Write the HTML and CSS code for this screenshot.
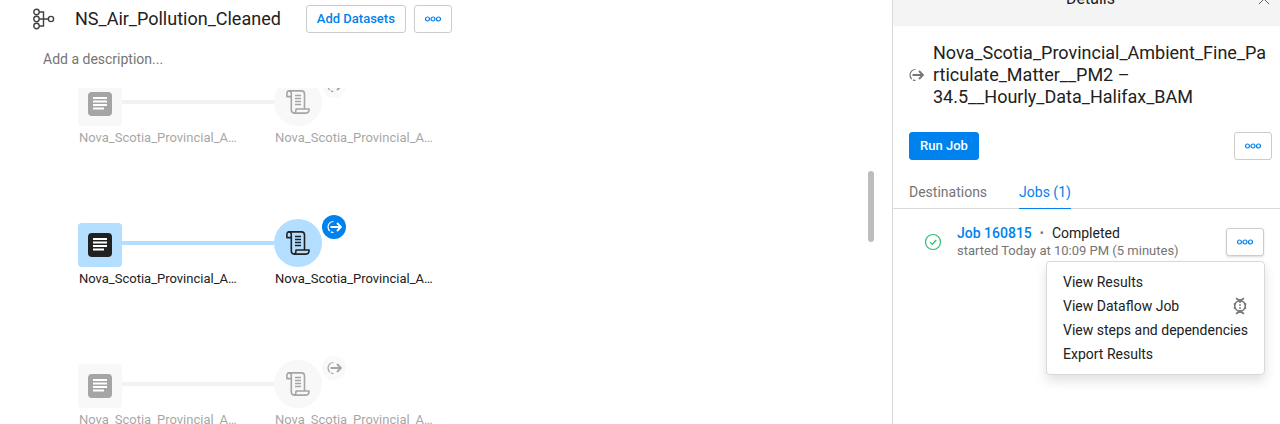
FILE: index.html
```html
<!DOCTYPE html>
<html lang="en">
<head>
<meta charset="utf-8">
<title>NS_Air_Pollution_Cleaned</title>
<link rel="stylesheet" href="styles.css">
</head>
<body>
<svg class="defs" aria-hidden="true">
  <defs>
    <symbol id="dots" viewBox="0 0 18 6">
      <g fill="none" stroke="currentColor" stroke-width="1.2"><circle cx="3.500" cy="3" r="2"/><circle cx="9" cy="3" r="2"/><circle cx="14.500" cy="3" r="2"/></g>
    </symbol>
    <symbol id="dataset" viewBox="0 0 24 24">
      <rect width="24" height="24" rx="4" fill="currentColor"/>
      <path class="dataset-lines" d="M5 6h14M5 9.500h14M5 13h14M5 16.500h11" fill="none" stroke-width="1.900"/>
    </symbol>
    <symbol id="recipe" viewBox="0 0 24 24">
      <g fill="none" stroke="currentColor" stroke-width="1.600" stroke-linejoin="round" stroke-linecap="round">
        <path d="M3 .9h12.500c2 0 3 1.200 3 3V18.500"/>
        <path d="M3 .9C1.500.9.9 2 .9 3.600v3h4.400v-3C5.300 2 4.600.9 3 .9z"/>
        <path d="M5.300 6.600v13c0 2.200 1 3.500 3 3.500h11.700c2 0 3.100-1.600 3.100-4.100H10c0 2.500-.5 4.100-2 4.100"/>
      </g>
      <path d="M9 5.500h6M9 8.500h6M9 11.500h6M9 14.500h6" stroke="currentColor" stroke-width="1.500" fill="none"/>
    </symbol>
    <symbol id="output" viewBox="0 0 16 14">
      <path d="M7.500 1.500a5.500 5.500 0 1 0 0 11" fill="none" stroke="currentColor" stroke-width="1.200" stroke-dasharray="13 1.200"/>
      <path d="M4.500 7H15M11 3l4 4-4 4" fill="none" stroke="currentColor" stroke-width="1.900"/>
    </symbol>
  </defs>
</svg>
<div class="app">
  <main class="flow">
    <header class="flow-header">
      <svg class="flow-icon" viewBox="0 0 22 22" fill="none" stroke="currentColor" stroke-width="1.400" aria-hidden="true">
        <circle cx="3.500" cy="4" r="2.700"/><circle cx="3.500" cy="11" r="2.700"/><circle cx="3.500" cy="18" r="2.700"/><circle cx="18" cy="11" r="2.600"/>
        <path d="M6.200 4h4.300v14H6.200M6.200 11h9.200"/>
      </svg>
      <h1 class="flow-title">NS_Air_Pollution_Cleaned</h1>
      <button class="button button-add" type="button">Add Datasets</button>
      <button class="button button-more" type="button" aria-label="More flow actions"><svg class="dots"><use href="#dots"/></svg></button>
    </header>
    <p class="description">Add a description...</p>
    <section class="canvas">
      <ul class="rows">
        <li class="row">
          <div class="node">
            <div class="node-line"><span class="tile"><svg class="node-icon"><use href="#dataset"/></svg></span><span class="link"></span></div>
            <span class="node-label">Nova_Scotia_Provincial_A…</span>
          </div>
          <div class="node">
            <div class="node-line"><span class="disc"><svg class="node-icon"><use href="#recipe"/></svg></span><span class="badge"><svg class="badge-icon"><use href="#output"/></svg></span></div>
            <span class="node-label">Nova_Scotia_Provincial_A…</span>
          </div>
        </li>
        <li class="row row-selected">
          <div class="node">
            <div class="node-line"><span class="tile"><svg class="node-icon"><use href="#dataset"/></svg></span><span class="link"></span></div>
            <span class="node-label">Nova_Scotia_Provincial_A…</span>
          </div>
          <div class="node">
            <div class="node-line"><span class="disc"><svg class="node-icon"><use href="#recipe"/></svg></span><span class="badge"><svg class="badge-icon"><use href="#output"/></svg></span></div>
            <span class="node-label">Nova_Scotia_Provincial_A…</span>
          </div>
        </li>
        <li class="row">
          <div class="node">
            <div class="node-line"><span class="tile"><svg class="node-icon"><use href="#dataset"/></svg></span><span class="link"></span></div>
            <span class="node-label">Nova_Scotia_Provincial_A…</span>
          </div>
          <div class="node">
            <div class="node-line"><span class="disc"><svg class="node-icon"><use href="#recipe"/></svg></span><span class="badge"><svg class="badge-icon"><use href="#output"/></svg></span></div>
            <span class="node-label">Nova_Scotia_Provincial_A…</span>
          </div>
        </li>
      </ul>
      <div class="scroll-thumb"></div>
    </section>
  </main>
  <aside class="panel">
    <header class="panel-header">
      <h2 class="panel-title">Details</h2>
      <button class="close" type="button" aria-label="Close"><svg class="close-icon" viewBox="0 0 12 12" fill="none" stroke="currentColor"><path d="M1 1l10 10M11 1L1 11"/></svg></button>
    </header>
    <div class="output">
      <svg class="output-icon" aria-hidden="true"><use href="#output"/></svg>
      <h3 class="output-name">Nova_Scotia_Provincial_Ambient_Fine_Particulate_Matter__PM2 – 34.5__Hourly_Data_Halifax_BAM</h3>
    </div>
    <div class="actions">
      <button class="button button-run" type="button">Run Job</button>
      <button class="button button-more" type="button" aria-label="More output actions"><svg class="dots"><use href="#dots"/></svg></button>
    </div>
    <nav class="tabs">
      <a class="tab" href="#destinations">Destinations</a>
      <a class="tab tab-active" href="#jobs">Jobs (1)</a>
    </nav>
    <div class="job">
      <svg class="job-status" viewBox="0 0 18 18" fill="none" stroke="currentColor" stroke-width="1.200" aria-hidden="true"><circle cx="9" cy="9" r="7.500"/><path d="M6 9.200l2.200 2.200 4-4.400"/></svg>
      <div class="job-text">
        <div class="job-head"><a class="job-link" href="#job">Job 160815</a><span class="job-dot">•</span><span>Completed</span></div>
        <div class="job-time">started Today at 10:09 PM (5 minutes)</div>
      </div>
      <div class="job-menu">
        <button class="button button-more button-open" type="button" aria-label="Job actions" aria-expanded="true"><svg class="dots"><use href="#dots"/></svg></button>
        <div class="menu" role="menu">
          <button class="menu-item" type="button" role="menuitem">View Results</button>
          <button class="menu-item" type="button" role="menuitem">View Dataflow Job
            <svg class="dataflow-icon" viewBox="0 0 14 18" fill="none" stroke="currentColor" aria-hidden="true"><path d="M3 1.300L7 3.800l4-2.500M3 16.700l4-2.500 4 2.500" stroke-width="1.700"/><path d="M7 4v10" stroke-width="1.300" stroke-dasharray="2 1"/><circle cx="7" cy="9" r="5.300" stroke-width="1.500"/><g fill="currentColor" stroke="none"><circle cx="7" cy="3.700" r="1.500"/><circle cx="7" cy="14.300" r="1.500"/><circle cx="1.700" cy="7" r="1.100"/><circle cx="1.700" cy="11" r="1.100"/><circle cx="12.300" cy="7" r="1.100"/><circle cx="12.300" cy="11" r="1.100"/></g></svg>
          </button>
          <button class="menu-item" type="button" role="menuitem">View steps and dependencies</button>
          <button class="menu-item" type="button" role="menuitem">Export Results</button>
        </div>
      </div>
    </div>
  </aside>
</div>
</body>
</html>
```

FILE: styles.css
```css
* { box-sizing: border-box; }
body {
  margin: 0;
  overflow: hidden;
  font: 14px/18px Roboto, "Liberation Sans", sans-serif;
  color: #212121;
  background: #fff;
}
h1, h2, h3, p, ul { margin: 0; padding: 0; font-weight: 400; }
ul { list-style: none; }
a { color: inherit; text-decoration: none; }
svg { display: block; flex: none; }
.defs { position: absolute; width: 0; height: 0; }
.app { display: grid; grid-template-columns: minmax(0, 1fr) 388px; height: 100vh; }

.button {
  display: inline-flex;
  align-items: center;
  justify-content: center;
  flex: none;
  height: 28px;
  padding: 0 10px;
  border: 1px solid #ccc;
  border-radius: 3px;
  background: #fff;
  color: #0082ee;
  font: 500 13px/18px Roboto, "Liberation Sans", sans-serif;
}
.button-add { width: 100px; margin-left: 17px; padding: 0; }
.button-more { width: 38px; padding: 0; }
.button-run { width: 70px; padding: 0; background: #0082ee; border-color: #0082ee; color: #fff; }
.button-open { box-shadow: 0 1px 2px rgba(0, 0, 0, .15); }
.dots { width: 18px; height: 6px; }

.flow { display: flex; flex-direction: column; min-width: 0; min-height: 0; }
.flow-header { display: flex; align-items: center; gap: 8px; padding: 5px 33px 0; }
.flow-icon { width: 22px; height: 22px; margin-right: 12px; color: #424242; }
.flow-title { font-size: 18px; line-height: 22px; }
.description { padding: 17px 43px 20px; color: #757575; }
.canvas { position: relative; flex: 1; min-height: 0; overflow: hidden; }
.rows { margin-top: -14px; padding-left: 78px; }
.row { display: flex; height: 141px; opacity: .4; }
.row-selected { opacity: 1; }
.node { width: 196px; }
.node-line { display: flex; height: 52px; align-items: flex-end; }
.tile, .disc, .badge { display: flex; flex: none; align-items: center; justify-content: center; }
.tile { width: 44px; height: 44px; border-radius: 4px; background: #eee; }
.disc { width: 48px; height: 48px; border-radius: 50%; background: #eee; }
.badge { align-self: flex-start; width: 24px; height: 24px; border-radius: 50%; background: #f2f2f2; }
.node-icon { width: 24px; height: 24px; }
.dataset-lines { stroke: #fff; }
.badge-icon { width: 16px; height: 14px; }
.link { flex: 1; height: 4px; margin-bottom: 22px; background: #e0e0e0; }
.node-label { display: block; padding: 3px 1px; white-space: nowrap; font-size: 13px; }
.row-selected .tile, .row-selected .disc, .row-selected .link { background: #b3deff; }
.row-selected .badge { background: #0082ee; color: #fff; }
.row-selected .dataset-lines { stroke: #b3deff; }
.scroll-thumb { position: absolute; top: 83px; right: 18px; width: 6px; height: 71px; border-radius: 3px; background: #bdbdbd; }

.panel { min-width: 0; border-left: 1px solid #d9d9d9; }
.panel-header { display: flex; align-items: center; justify-content: center; height: 54px; margin-top: -28px; padding: 0 10px 0 30px; background: #f4f4f4; }
.panel-title { flex: 1; font-size: 16px; line-height: 22px; text-align: center; }
.close { display: flex; width: 12px; height: 12px; padding: 0; border: 0; background: none; color: #616161; }
.close-icon { width: 12px; height: 12px; }
.output { display: flex; align-items: center; gap: 9px; padding: 16px 10px 0 15px; }
.output-icon { width: 16px; height: 14px; color: #757575; }
.output-name { flex: 1; min-width: 0; font-size: 18px; line-height: 22px; overflow-wrap: anywhere; }
.actions { display: flex; justify-content: space-between; padding: 24px 8px 0 16px; }
.tabs { display: flex; gap: 32px; margin-top: 19px; padding: 0 16px; border-bottom: 1px solid #d9d9d9; }
.tab { padding: 4px 0 7px; margin-bottom: -1px; border-bottom: 1px solid transparent; color: #757575; }
.tab-active { color: #0082ee; border-color: #0082ee; }
.job { display: flex; align-items: flex-start; padding: 15px 16px 0 31px; }
.job-status { width: 18px; height: 18px; margin: 9px 15px 0 0; color: #2dbd6e; }
.job-text { flex: 1; }
.job-head { display: flex; gap: 8px; }
.job-link { color: #0082ee; font-weight: 500; }
.job-dot { color: #757575; font-size: 12px; }
.job-time { color: #757575; font-size: 13px; }
.job-menu { position: relative; padding-top: 4px; }
.menu {
  position: absolute;
  top: 37px;
  right: -1px;
  width: 219px;
  padding: 8px 0;
  border: 1px solid #d9d9d9;
  border-radius: 4px;
  background: #fff;
  box-shadow: 0 6px 12px rgba(0, 0, 0, .12);
}
.menu-item {
  display: flex;
  align-items: center;
  justify-content: space-between;
  width: 100%;
  height: 24px;
  padding: 0 17px 0 16px;
  border: 0;
  background: none;
  color: inherit;
  font: inherit;
  white-space: nowrap;
}
.dataflow-icon { width: 14px; height: 18px; color: #757575; }
```
